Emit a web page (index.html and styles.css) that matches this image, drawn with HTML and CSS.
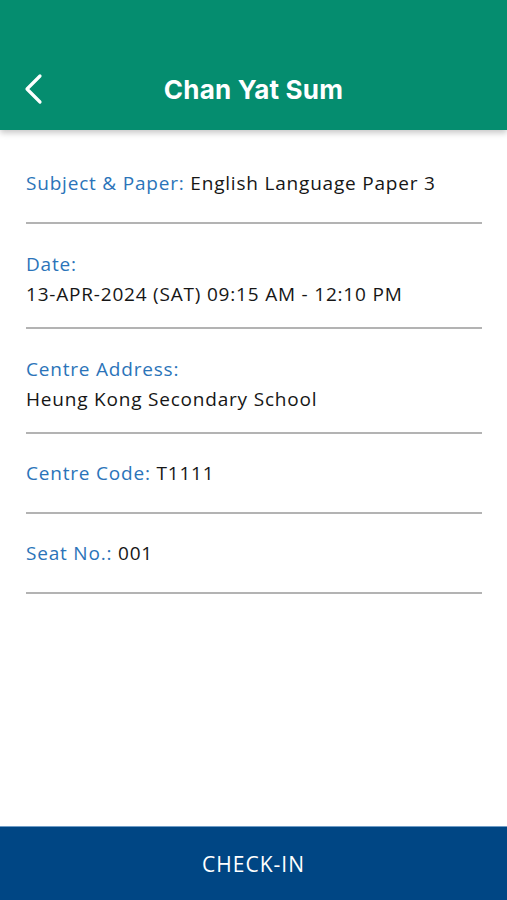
FILE: index.html
```html
<!DOCTYPE html>
<html lang="en">
<head>
<meta charset="utf-8">
    <title>Chan Yat Sum</title>
    <link rel="stylesheet" href="styles.css">
</head>
<body>
    <div class="screen">
        <div class="header">
            <button type="button" class="back-btn" aria-label="Back">
                <svg width="24" height="32" viewBox="0 0 24 32">
                    <path d="M18 3 L5 16 L18 29" fill="none" stroke="#fff" stroke-width="3.2" stroke-linecap="round" stroke-linejoin="round"/>
                </svg>
            </button>
            <h1>Chan Yat Sum</h1>
        </div>

        <div class="details">
            <div class="row">
                <span class="label">Subject &amp; Paper:</span> <span class="value">English Language Paper 3</span>
            </div>
            <div class="row two-line">
                <div class="label">Date:</div>
                <div class="value">13-APR-2024 (SAT) 09:15 AM - 12:10 PM</div>
            </div>
            <div class="row two-line">
                <div class="label">Centre Address:</div>
                <div class="value">Heung Kong Secondary School</div>
            </div>
            <div class="row">
                <span class="label">Centre Code:</span> <span class="value">T1111</span>
            </div>
            <div class="row">
                <span class="label">Seat No.:</span> <span class="value">001</span>
            </div>
        </div>

        <button type="button" class="checkin-btn">CHECK-IN</button>
    </div>
</body>
</html>
```

FILE: styles.css
```css
body {
    margin: 0;
    font-family: "Open Sans", "Noto Sans", sans-serif;
    background-color: #fff;
}
.screen {
    height: 900px;
    display: flex;
    flex-direction: column;
}
.header {
    position: relative;
    height: 130px;
    background-color: #058d6f;
    box-shadow: 0 3px 6px rgba(0, 0, 0, 0.22);
    display: flex;
    align-items: center;
    justify-content: center;
    padding-top: 48px;
    box-sizing: border-box;
}
.back-btn {
    position: absolute;
    left: 22px;
    top: 73px;
    background: none;
    border: none;
    padding: 0;
    cursor: pointer;
}
.header h1 {
    margin: 0;
    color: #fff;
    font-family: "Inter", sans-serif;
    font-weight: 700;
    font-size: 26px;
    letter-spacing: 0.2px;
}
.details {
    flex: 1;
    padding: 14px 25px 0 26px;
}
.row {
    font-size: 19px;
    line-height: 30px;
    letter-spacing: 0.8px;
    padding: 24px 0 24px;
    border-bottom: 2px solid #b3b3b3;
}
.row.two-line {
    padding-top: 25px;
    padding-bottom: 18px;
}
.label {
    color: #2b74b9;
}
.value {
    color: #161616;
}
.checkin-btn {
    height: 74px;
    width: 100%;
    border: none;
    border-top: 1px solid #6f9cc6;
    background-color: #004684;
    color: #fff;
    font-family: "Open Sans", sans-serif;
    font-weight: 500;
    font-size: 21px;
    letter-spacing: 1px;
    cursor: pointer;
}
```
